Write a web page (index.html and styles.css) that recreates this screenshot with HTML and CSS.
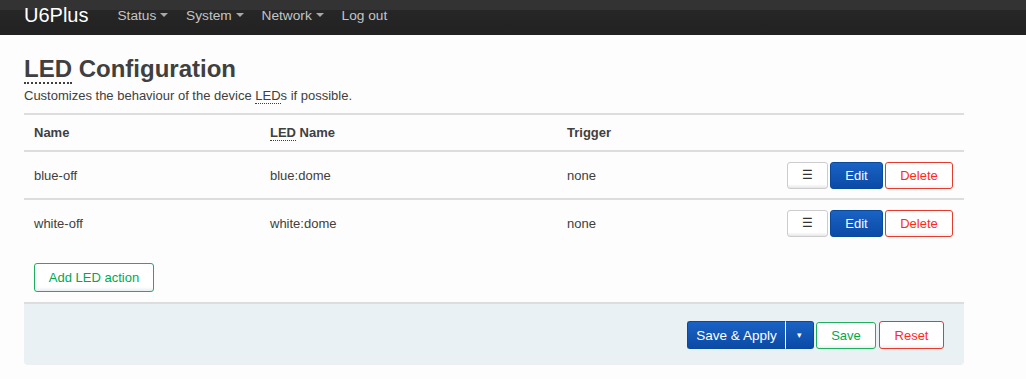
FILE: index.html
```html
<!DOCTYPE html>
<html>
<head>
<meta charset="utf-8">
<link rel="stylesheet" href="styles.css">
</head>
<body>
<header class="topbar">
  <a class="brand">U6Plus</a>
  <nav class="nav">
    <a class="nav-item">Status <span class="caret"></span></a>
    <a class="nav-item">System <span class="caret"></span></a>
    <a class="nav-item">Network <span class="caret"></span></a>
    <a class="nav-item">Log out</a>
  </nav>
</header>
<main class="main">
  <h2 class="title"><abbr>LED</abbr> Configuration</h2>
  <div class="desc">Customizes the behaviour of the device <abbr>LED</abbr>s if possible.</div>
  <div class="table">
    <div class="tr th">
      <div class="td">Name</div>
      <div class="td"><abbr>LED</abbr> Name</div>
      <div class="td">Trigger</div>
      <div class="td"></div>
    </div>
    <div class="tr">
      <div class="td">blue-off</div>
      <div class="td">blue:dome</div>
      <div class="td">none</div>
      <div class="td actions">
        <button class="btn btn-menu">&#9776;</button>
        <button class="btn btn-primary">Edit</button>
        <button class="btn btn-neg">Delete</button>
      </div>
    </div>
    <div class="tr">
      <div class="td">white-off</div>
      <div class="td">white:dome</div>
      <div class="td">none</div>
      <div class="td actions">
        <button class="btn btn-menu">&#9776;</button>
        <button class="btn btn-primary">Edit</button>
        <button class="btn btn-neg">Delete</button>
      </div>
    </div>
  </div>
  <div class="add-row">
    <button class="btn btn-add">Add LED action</button>
  </div>
  <div class="page-actions">
    <div class="split">
      <button class="btn btn-primary split-main">Save &amp; Apply</button>
      <button class="btn btn-primary split-toggle">&#9662;</button>
    </div>
    <button class="btn btn-add btn-save">Save</button>
    <button class="btn btn-neg btn-reset">Reset</button>
  </div>
</main>
</body>
</html>
```

FILE: styles.css
```css
* { box-sizing: border-box; }
body {
  margin: 0;
  background: #fdfdfd;
  font-family: "Liberation Sans", Arial, sans-serif;
  font-size: 13px;
  color: #404040;
}
.topbar {
  height: 35px;
  background: linear-gradient(to bottom, #333 0, #333 10px, #262626 10px, #222 100%);
  display: flex;
  align-items: center;
  padding-left: 24px;
}
.brand {
  color: #fff;
  font-size: 20px;
  line-height: 35px;
  margin-right: 29px;
  margin-top: -4px;
}
.nav { display: flex; align-items: center; height: 35px; }
.nav-item {
  color: #c4c4c4;
  font-size: 13.7px;
  margin-right: 18px;
  line-height: 35px;
  margin-top: -4px;
}
.caret {
  display: inline-block;
  width: 0; height: 0;
  border-left: 4px solid transparent;
  border-right: 4px solid transparent;
  border-top: 4px solid #a8a8a8;
  vertical-align: middle;
  margin-left: 0;
  margin-top: -2px;
}
.main {
  width: 940px;
  margin-left: 24px;
  padding-top: 20px;
}
abbr {
  text-decoration: none;
  border-bottom: 1px dotted #404040;
}
.title {
  margin: 0;
  font-size: 24px;
  font-weight: bold;
  line-height: 28px;
  color: #404040;
}
.title abbr { border-bottom: 2px dotted #404040; }
.desc {
  margin-top: 5px;
  font-size: 13px;
  line-height: 16px;
}
.table { margin-top: 9px; }
.tr {
  display: grid;
  grid-template-columns: 236px 297px 1fr 190px;
  border-top: 2px solid #ddd;
  height: 48px;
  align-items: center;
}
.tr.th { height: 37px; font-weight: bold; }
.td { padding-left: 10px; }
.actions {
  display: flex;
  justify-content: flex-end;
  gap: 2px;
  padding-right: 11px;
}
.btn {
  font-family: "Liberation Sans", Arial, sans-serif;
  font-size: 13px;
  height: 27px;
  padding: 0 14px;
  border-radius: 3px;
  border: 1px solid #ccc;
  background: linear-gradient(to bottom, #fff 0, #fff 85%, #e6e6e6 100%);
  color: #404040;
  cursor: pointer;
}
.btn-menu { width: 41px; padding: 0; font-size: 12px; color: #333; border-color: #ccc; }
.btn-primary {
  color: #fff;
  border: 1px solid #0a4a9a;
  background: linear-gradient(to bottom, #1a63c4 0, #0b4aa6 100%);
  width: 53px;
  padding: 0;
}
.btn-neg {
  color: #ff2a1a;
  border: 1px solid #e83a2a;
  background: linear-gradient(to bottom, #fff 0, #fff 85%, #eaeef2 100%);
  width: 68px;
  padding: 0;
}
.add-row { padding: 17px 0 10px 10px; }
.btn-add {
  color: #00a850;
  border: 1px solid #1daf5c;
  background: linear-gradient(to bottom, #fff 0, #fff 85%, #e8eef2 100%);
  height: 29px;
  width: 120px;
  padding: 0;
  display: block;
}
.page-actions {
  background: #e9f1f5;
  border-top: 2px solid #ddd;
  border-radius: 0 0 4px 4px;
  height: 63px;
  display: flex;
  justify-content: flex-end;
  align-items: center;
  padding-right: 20px;
  padding-top: 1px;
}
.split { display: flex; margin-right: 2px; }
.split .btn { height: 28px; }
.split-main {
  width: 99px;
  font-size: 13.5px;
  border-radius: 3px 0 0 3px;
  border-right: 1px solid #fff;
}
.split-toggle {
  width: 28px;
  border-radius: 0 3px 3px 0;
  border-left: 0;
  font-size: 9px;
}
.btn-save { width: 60px; height: 27px; margin-right: 3px; }
.btn-reset { width: 65px; height: 28px; }
```
